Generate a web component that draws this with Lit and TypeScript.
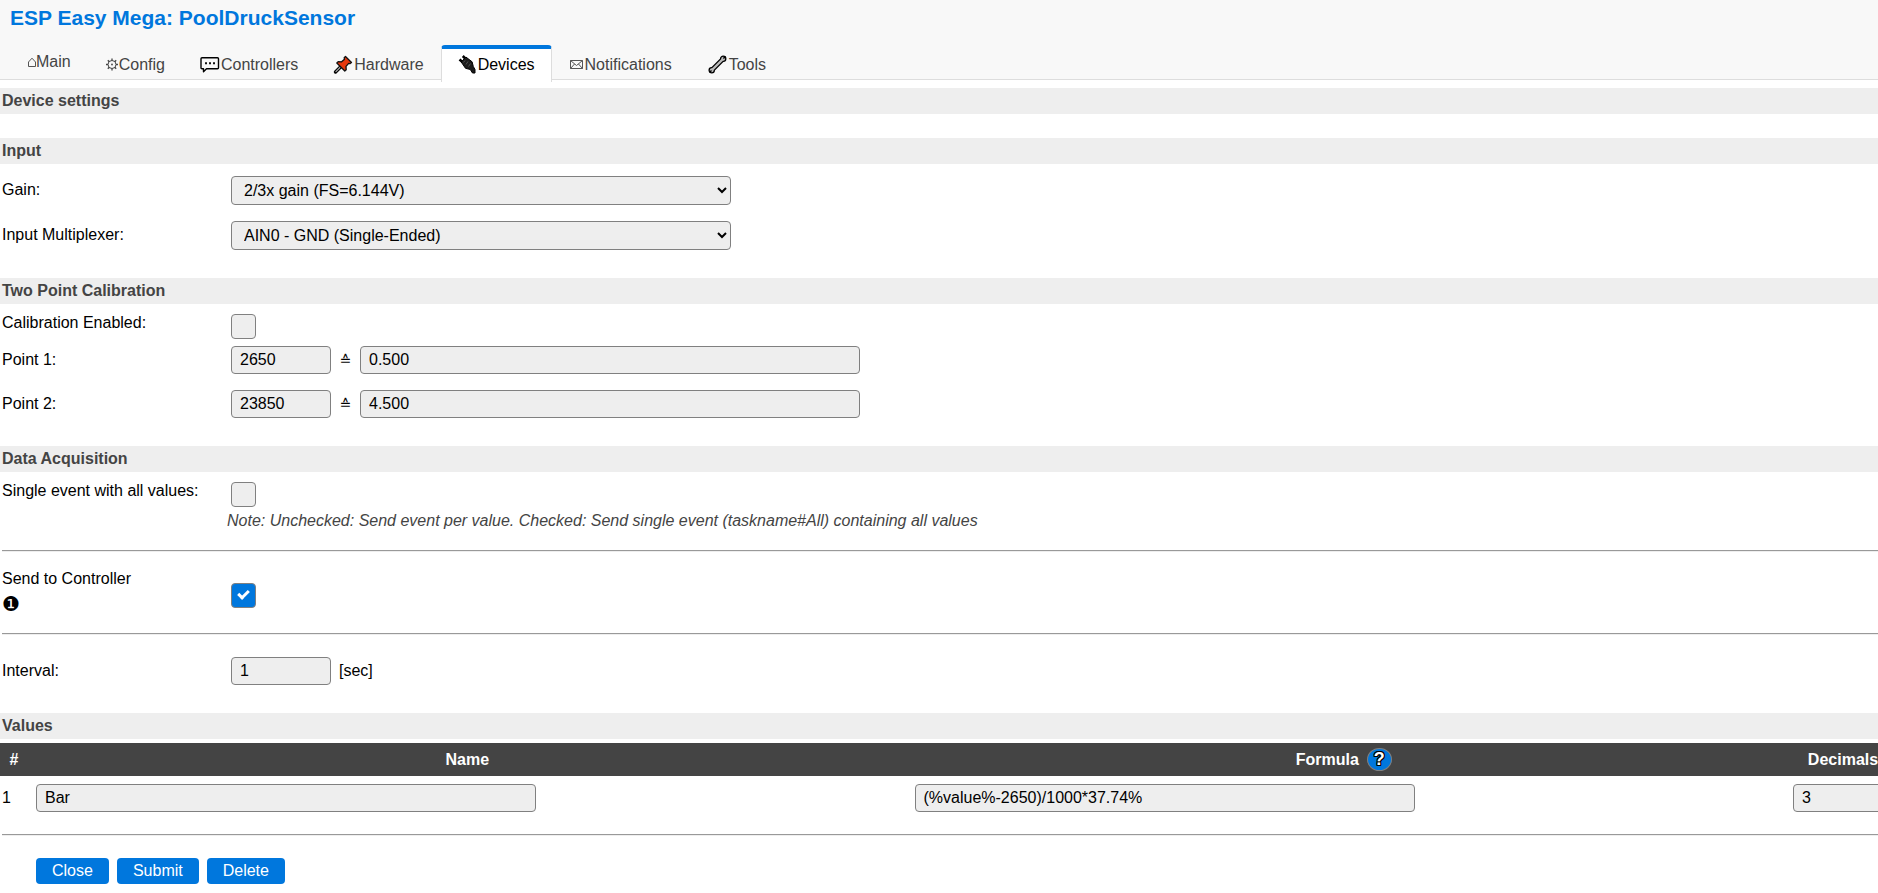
import { LitElement, html, css, svg } from "lit";
import { customElement } from "lit/decorators.js";

const icons = {
  main: svg`<svg class="icon" width="9" height="18" viewBox="0 1 9 18" aria-hidden="true">
    <path d="M1.500 14.500V10L5 6.200l3.500 3.800v4.500z" fill="none" stroke="#555" stroke-width="1"/></svg>`,
  config: svg`<svg class="icon" width="14" height="24" viewBox="0 1 14 24" aria-hidden="true">
    <g fill="none" stroke="#444"><circle cx="7" cy="12.500" r="4"/>
    <path d="M7 6.500v2M7 16.500v2M1 12.500h2M11 12.500h2M2.800 8.300l1.400 1.400M9.800 15.300l1.400 1.400M2.800 16.700l1.400-1.400M9.800 9.700l1.400-1.400" stroke-width="1.300"/></g>
    <circle cx="7" cy="12.500" r="0.900" fill="#444"/></svg>`,
  controllers: svg`<svg class="icon" width="22" height="24" viewBox="0 1 22 24" aria-hidden="true">
    <path d="M3 5.800h15.500q1 0 1 1v9q0 1-1 1H7.500l-3 3v-3H3q-1 0-1-1v-9q0-1 1-1z" fill="#f8f8f8" stroke="#000" stroke-width="1.400" stroke-linejoin="round"/>
    <path d="M6 10.200h2v2H6zM10 10.200h2v2h-2zM14 10.200h2v2h-2z" fill="#111"/></svg>`,
  hardware: svg`<svg class="icon" width="22" height="24" viewBox="0 1 22 24" aria-hidden="true">
    <path d="M9 14.500L3.500 20" stroke="#000" stroke-width="3.400" stroke-linecap="round"/>
    <path d="M8.500 15L3.600 19.900" stroke="#aaa" stroke-width="1.200"/>
    <path d="M13.500 4.500l6 6-1.600 1.200-1.200-.3-2.700 3 .2 3.400-1.400 1.200-8-8L6.200 9.600l3.400.2 2.900-2.600-.3-1.400z" fill="#e8380d" stroke="#111" stroke-width="1.300" stroke-linejoin="round"/></svg>`,
  devices: svg`<svg class="icon" width="20" height="24" viewBox="0 1 20 24" aria-hidden="true">
    <path d="M1.500 7.500l2.700 2.300M4.800 4l2.500 2.600" stroke="#000" stroke-width="2.600"/>
    <path d="M3.200 10l4.700-5 6.200 4.800 1.200 4.700 1.700 3v3.500h-2.500l-2.200-3.500-4.800-1.200z" fill="#1c1c1c" stroke="#000" stroke-linejoin="round"/>
    <path d="M7 8.500l-1.500 2M10 9.500l-2 3M12.500 11.500l-2 3" stroke="#666" stroke-width=".7"/></svg>`,
  notifications: svg`<svg class="icon" width="16" height="24" viewBox="0 1 16 24" aria-hidden="true">
    <path d="M1.500 8.500h12v8h-12zM1.500 8.500l6 5 6-5M1.500 16.500l4-4.500M13.500 16.500l-4-4.500" fill="none" stroke="#555" stroke-width="1"/></svg>`,
  tools: svg`<svg class="icon" width="23" height="24" viewBox="0 1 23 24" aria-hidden="true">
    <path d="M6 18L17 7" stroke="#000" stroke-width="4.600"/>
    <circle cx="5.700" cy="18.200" r="2.600" fill="#bbb" stroke="#000" stroke-width="1.300"/>
    <circle cx="17.200" cy="6.700" r="2.600" fill="#bbb" stroke="#000" stroke-width="1.300"/>
    <path d="M6 18L17 7" stroke="#bbb" stroke-width="2.400"/>
    <path d="M3.500 20.400l2-2M19.400 4.500l-2 2" stroke="#000" stroke-width="1.400"/></svg>`,
};

const tabs = [
  { label: "Main", icon: icons.main },
  { label: "Config", icon: icons.config },
  { label: "Controllers", icon: icons.controllers },
  { label: "Hardware", icon: icons.hardware },
  { label: "Devices", icon: icons.devices, active: true },
  { label: "Notifications", icon: icons.notifications },
  { label: "Tools", icon: icons.tools },
];

@customElement("app-root")
export class AppRoot extends LitElement {
  static styles = css`
    :host {
      display: block;
      overflow-x: hidden;
      background: #fff;
      color: #000;
      font: 16px/18px "Liberation Sans", Arial, sans-serif;
    }
    * { box-sizing: border-box; }
    header {
      background: #f8f8f8;
      border-bottom: 1px solid #ddd;
      height: 80px;
      margin-bottom: 8px;
    }
    h1 {
      margin: 0;
      padding: 6px 10px 15px;
      font-size: 21px;
      line-height: 24px;
      font-weight: bold;
      color: #07d;
    }
    nav { display: flex; align-items: flex-start; padding-left: 10px; }
    .tab {
      display: flex;
      align-items: center;
      padding: 4px 16px 5px;
      border: 1px solid transparent;
      border-top-width: 4px;
      border-bottom: 0;
      border-radius: 4px 4px 0 0;
      color: #444;
      text-decoration: none;
    }
    .tab.active {
      background: #fff;
      color: #000;
      border-color: #07d #ddd #ddd;
    }
    .icon { display: block; flex: none; }
    h2 {
      margin: 0;
      padding: 1px 2px;
      font-size: 16px;
      line-height: 24px;
      background: #eee;
      color: #444;
    }
    .page-title { margin-bottom: 24px; }
    .fields { padding-bottom: 19px; }
    .roomy { padding-top: 5px; }
    .row {
      display: grid;
      grid-template-columns: 225px 1fr;
      align-items: start;
      padding: 7px 2px 9px;
    }
    .row > :first-child { padding-top: 5px; }
    .check-row { padding: 10px 2px 0; }
    .check-row > :first-child { padding-top: 0; }
    .controls { display: flex; align-items: center; padding-left: 4px; }
    .box, select {
      border: 1px solid gray;
      border-radius: 4px;
      background: #eee;
      color: #000;
      font: inherit;
      margin: 0;
      min-width: 0;
    }
    .box { width: 100px; height: 28px; padding: 4px 8px; }
    .wide { width: 500px; }
    select { width: 500px; height: 29px; padding: 4px 8px; }
    .equals { width: 29px; text-align: center; font: 14px/18px "DejaVu Sans", sans-serif; }
    .unit { padding-left: 8px; }
    .check {
      appearance: none;
      display: grid;
      justify-content: center;
      align-content: start;
      width: 25px;
      height: 25px;
      margin: 0;
      border: 1px solid gray;
      border-radius: 4px;
      background: #eee;
    }
    .check:checked { background: #07d; }
    .check:checked::after {
      content: "";
      width: 4px;
      height: 8px;
      margin-top: 4px;
      border: solid #fff;
      border-width: 0 3px 3px 0;
      transform: rotate(45deg);
    }
    .note { padding-top: 5px; font-style: italic; color: #444; }
    hr {
      margin: 0 0 0 2px;
      border: 0;
      border-top: 1px solid #999;
      border-bottom: 1px solid #eee;
    }
    .after-note { margin-top: 20px; }
    .send { padding: 18px 2px 20px; }
    .send .controls { padding-top: 13px; }
    .send > :first-child { padding: 0; }
    .badge { display: block; padding-top: 7px; font: 20px/18px "DejaVu Sans", sans-serif; }
    .interval { padding-top: 15px; }
    .values {
      width: calc(100% + 23px);
      margin-top: 4px;
      border-collapse: collapse;
      table-layout: fixed;
    }
    .values th { height: 33px; padding: 0; background: #444; color: #fff; text-align: center; vertical-align: middle; }
    .values td { padding: 8px 0 22px 8px; vertical-align: top; }
    .values td:first-child { padding: 13px 0 0 2px; }
    .values .box { display: block; }
    .num { width: 28px; }
    .dec { width: 116px; }
    .formula { display: flex; justify-content: center; align-items: center; gap: 8px; padding-right: 4px; }
    .help {
      width: 25px;
      height: 23px;
      border: 1px solid gray;
      border-radius: 50%;
      background: #07d;
      color: #fff;
      font-size: 18px;
      line-height: 21px;
      text-decoration: none;
      text-shadow: 1px 0 #000, -1px 0 #000, 0 1px #000, 0 -1px #000, 1px 1px #000, -1px -1px #000, 1px -1px #000, -1px 1px #000;
    }
    .actions { display: flex; gap: 8px; padding: 22px 36px 8px; }
    .button {
      height: 26px;
      padding: 1px 16px;
      border: 0;
      border-radius: 4px;
      background: #07d;
      color: #fff;
      font: inherit;
      line-height: 24px;
    }
  `;

  private point(n: number, raw: string, value: string) {
    return html`<div class="row">
      <label for="raw${n}">Point ${n}:</label>
      <div class="controls">
        <input class="box" id="raw${n}" .value=${raw} />
        <span class="equals">≙</span>
        <input class="box wide" aria-label="Point ${n} value" .value=${value} />
      </div>
    </div>`;
  }

  render() {
    return html`
      <header>
        <h1>ESP Easy Mega: PoolDruckSensor</h1>
        <nav>
          ${tabs.map(
            (t) => html`<a class="tab ${t.active ? "active" : ""}" href="#">${t.icon}<span>${t.label}</span></a>`
          )}
        </nav>
      </header>
      <main>
        <h2 class="page-title">Device settings</h2>

        <h2>Input</h2>
        <div class="fields roomy">
          <div class="row">
            <label for="gain">Gain:</label>
            <div class="controls"><select id="gain"><option>2/3x gain (FS=6.144V)</option></select></div>
          </div>
          <div class="row">
            <label for="mux">Input Multiplexer:</label>
            <div class="controls"><select id="mux"><option>AIN0 - GND (Single-Ended)</option></select></div>
          </div>
        </div>

        <h2>Two Point Calibration</h2>
        <div class="fields">
          <div class="row check-row">
            <label for="cal">Calibration Enabled:</label>
            <div class="controls"><input class="check" type="checkbox" id="cal" /></div>
          </div>
          ${this.point(1, "2650", "0.500")} ${this.point(2, "23850", "4.500")}
        </div>

        <h2>Data Acquisition</h2>
        <div class="row check-row">
          <label for="single">Single event with all values:</label>
          <div>
            <div class="controls"><input class="check" type="checkbox" id="single" /></div>
            <div class="note">Note: Unchecked: Send event per value. Checked: Send single event (taskname#All) containing all values</div>
          </div>
        </div>
        <hr class="after-note" />
        <div class="row send">
          <label for="send">Send to Controller<span class="badge">❶</span></label>
          <div class="controls"><input class="check" type="checkbox" id="send" checked /></div>
        </div>
        <hr />
        <div class="fields interval">
          <div class="row">
            <label for="interval">Interval:</label>
            <div class="controls"><input class="box" id="interval" .value=${"1"} /><span class="unit">[sec]</span></div>
          </div>
        </div>

        <h2>Values</h2>
        <table class="values">
          <thead>
            <tr>
              <th class="num">#</th>
              <th>Name</th>
              <th><div class="formula">Formula <a class="help" href="#" aria-label="Formula help">?</a></div></th>
              <th class="dec">Decimals</th>
            </tr>
          </thead>
          <tbody>
            <tr>
              <td>1</td>
              <td><input class="box wide" aria-label="Name" .value=${"Bar"} /></td>
              <td><input class="box wide" aria-label="Formula" .value=${"(%value%-2650)/1000*37.74%"} /></td>
              <td><input class="box" aria-label="Decimals" .value=${"3"} /></td>
            </tr>
          </tbody>
        </table>
        <hr />
        <div class="actions">
          <button class="button" type="button">Close</button>
          <button class="button" type="submit">Submit</button>
          <button class="button" type="button">Delete</button>
        </div>
      </main>
    `;
  }
}
